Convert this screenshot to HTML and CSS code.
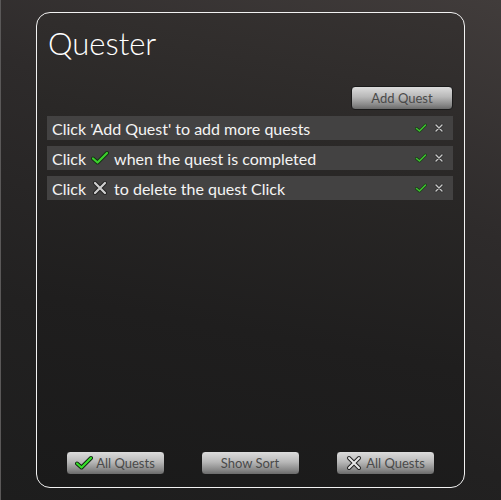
FILE: index.html
```html
<!DOCTYPE html>
<html>
<head>
<meta charset="utf-8">
<link rel="stylesheet" href="styles.css">
</head>
<body>
<div class="screen">
  <div class="panel">
    <h1 class="title">Quester</h1>
    <div class="toolbar">
      <button class="btn btn-add">Add Quest</button>
    </div>
    <ul class="quests">
      <li class="quest">
        <span class="quest-text">Click 'Add Quest' to add more quests</span>
        <span class="actions">
          <svg class="ico-s" viewBox="0 0 12 10"><path d="M1.5 5.5 L4.5 8 L10.5 2" fill="none" stroke="#1a3a1a" stroke-width="3" stroke-linecap="round" stroke-linejoin="round"/><path d="M1.5 5.5 L4.5 8 L10.5 2" fill="none" stroke="#3fbf2f" stroke-width="1.6" stroke-linecap="round" stroke-linejoin="round"/></svg>
          <svg class="ico-s" viewBox="0 0 10 10"><path d="M2 2 L8 8 M8 2 L2 8" fill="none" stroke="#2a2a2a" stroke-width="2.8" stroke-linecap="round"/><path d="M2 2 L8 8 M8 2 L2 8" fill="none" stroke="#c8c8c8" stroke-width="1.4" stroke-linecap="round"/></svg>
        </span>
      </li>
      <li class="quest">
        <span class="quest-text">Click <svg class="ico-l" viewBox="0 0 18 16"><path d="M2 8.5 L6.5 12.5 L16 3" fill="none" stroke="#123012" stroke-width="4" stroke-linecap="round" stroke-linejoin="round"/><path d="M2 8.5 L6.5 12.5 L16 3" fill="none" stroke="#3ccf2c" stroke-width="2.2" stroke-linecap="round" stroke-linejoin="round"/></svg> when the quest is completed</span>
        <span class="actions">
          <svg class="ico-s" viewBox="0 0 12 10"><path d="M1.5 5.5 L4.5 8 L10.5 2" fill="none" stroke="#1a3a1a" stroke-width="3" stroke-linecap="round" stroke-linejoin="round"/><path d="M1.5 5.5 L4.5 8 L10.5 2" fill="none" stroke="#3fbf2f" stroke-width="1.6" stroke-linecap="round" stroke-linejoin="round"/></svg>
          <svg class="ico-s" viewBox="0 0 10 10"><path d="M2 2 L8 8 M8 2 L2 8" fill="none" stroke="#2a2a2a" stroke-width="2.8" stroke-linecap="round"/><path d="M2 2 L8 8 M8 2 L2 8" fill="none" stroke="#c8c8c8" stroke-width="1.4" stroke-linecap="round"/></svg>
        </span>
      </li>
      <li class="quest">
        <span class="quest-text">Click <svg class="ico-l" viewBox="0 0 16 16"><path d="M3 3 L13 13 M13 3 L3 13" fill="none" stroke="#222" stroke-width="4" stroke-linecap="round"/><path d="M3 3 L13 13 M13 3 L3 13" fill="none" stroke="#cfcfcf" stroke-width="2.2" stroke-linecap="round"/></svg> to delete the quest Click</span>
        <span class="actions">
          <svg class="ico-s" viewBox="0 0 12 10"><path d="M1.5 5.5 L4.5 8 L10.5 2" fill="none" stroke="#1a3a1a" stroke-width="3" stroke-linecap="round" stroke-linejoin="round"/><path d="M1.5 5.5 L4.5 8 L10.5 2" fill="none" stroke="#3fbf2f" stroke-width="1.6" stroke-linecap="round" stroke-linejoin="round"/></svg>
          <svg class="ico-s" viewBox="0 0 10 10"><path d="M2 2 L8 8 M8 2 L2 8" fill="none" stroke="#2a2a2a" stroke-width="2.8" stroke-linecap="round"/><path d="M2 2 L8 8 M8 2 L2 8" fill="none" stroke="#c8c8c8" stroke-width="1.4" stroke-linecap="round"/></svg>
        </span>
      </li>
    </ul>
    <div class="footer">
      <button class="btn btn-foot"><svg class="ico-b" viewBox="0 0 18 16"><path d="M2 8.5 L6.5 12.5 L16 3" fill="none" stroke="#0d200d" stroke-width="4" stroke-linecap="round" stroke-linejoin="round"/><path d="M2 8.5 L6.5 12.5 L16 3" fill="none" stroke="#36e02a" stroke-width="2.2" stroke-linecap="round" stroke-linejoin="round"/></svg>All Quests</button>
      <button class="btn btn-foot">Show Sort</button>
      <button class="btn btn-foot"><svg class="ico-b" viewBox="0 0 16 16"><path d="M3 3 L13 13 M13 3 L3 13" fill="none" stroke="#222" stroke-width="4" stroke-linecap="round"/><path d="M3 3 L13 13 M13 3 L3 13" fill="none" stroke="#e8e8e8" stroke-width="2" stroke-linecap="round"/></svg>All Quests</button>
    </div>
  </div>
</div>
</body>
</html>
```
FILE: styles.css
```css
html, body {
  margin: 0;
  padding: 0;
}
body {
  width: 501px;
  height: 500px;
  overflow: hidden;
  font-family: "Lato", "Noto Sans", sans-serif;
}
.screen {
  box-sizing: border-box;
  width: 501px;
  height: 500px;
  padding: 12px 0 0 36px;
  border-left: 1px solid #5a5858;
  background: linear-gradient(200deg, #413c3b 0%, #2e2b2b 35%, #222121 70%, #1d1d1d 100%);
}
.panel {
  box-sizing: border-box;
  width: 429px;
  height: 476px;
  margin-left: -1px;
  border: 1px solid #f2f2f2;
  border-radius: 14px;
  padding: 0 11px 12px 10px;
  display: flex;
  flex-direction: column;
  background: linear-gradient(190deg, #363231 0%, #2a2827 30%, #1f1e1e 65%, #1a1a1a 100%);
}
.title {
  margin: 11px 0 0 1px;
  font-family: "Lato", sans-serif;
  font-weight: 300;
  font-size: 31px;
  line-height: 38px;
  color: #ffffff;
}
.toolbar {
  display: flex;
  justify-content: flex-end;
  margin-top: 24px;
}
.btn {
  box-sizing: border-box;
  height: 24px;
  border: 1px solid #1a1a1a;
  border-radius: 4px;
  background: linear-gradient(to bottom, #dcdcdc 0%, #b8b8b8 45%, #8a8a8a 80%, #6a6a6a 100%);
  color: #4a4a4a;
  font-family: "Lato", sans-serif;
  font-size: 13px;
  padding: 0;
  display: flex;
  align-items: center;
  justify-content: center;
  gap: 3px;
}
.btn-add {
  width: 102px;
}
.quests {
  list-style: none;
  margin: 6px 0 0 0;
  padding: 0;
  display: flex;
  flex-direction: column;
  gap: 6px;
}
.quest {
  height: 24px;
  background: #434242;
  display: flex;
  align-items: center;
  justify-content: space-between;
  padding: 0 8px 0 5px;
  color: #f4f4f4;
  font-size: 16px;
}
.quest-text {
  display: flex;
  align-items: center;
  gap: 5px;
  white-space: nowrap;
}
.actions {
  display: flex;
  align-items: center;
  gap: 6px;
}
.ico-s {
  width: 12px;
  height: 10px;
}
.ico-l {
  width: 18px;
  height: 16px;
}
.ico-b {
  width: 18px;
  height: 16px;
}
.footer {
  margin-top: auto;
  display: flex;
  justify-content: center;
  gap: 36px;
}
.btn-foot {
  width: 99px;
}
```
